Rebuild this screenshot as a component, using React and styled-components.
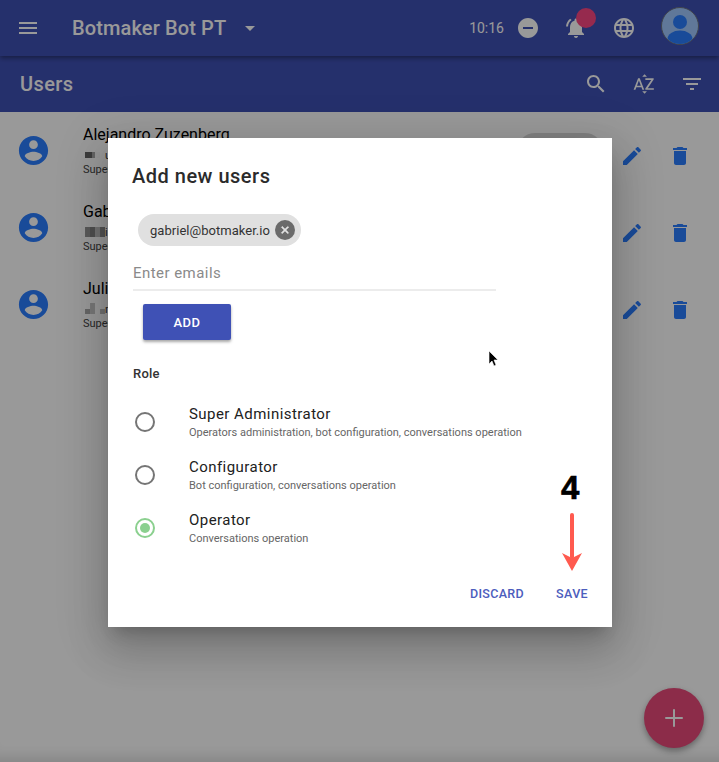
import React from "react";
import styled, { createGlobalStyle } from "styled-components";

const GlobalStyle = createGlobalStyle`
  html, body {
    margin: 0;
    padding: 0;
    height: 100%;
    overflow: hidden;
    background: #fff;
    font-family: Roboto, "Liberation Sans", sans-serif;
  }
`;

const Page = styled.div`
  position: relative;
  width: 719px;
  height: 762px;
  overflow: hidden;
  background: #fff;
`;

const TopBar = styled.header`
  position: relative;
  z-index: 1;
  height: 56px;
  display: flex;
  align-items: center;
  padding-left: 16px;
  padding-right: 20px;
  background: #3f51b5;
  color: #fff;
  box-shadow: 0 2px 5px rgba(0, 0, 0, 0.4);
`;

const AppName = styled.div`
  margin-left: 32px;
  font-size: 20px;
  font-weight: 500;
  letter-spacing: 0.13px;
`;

const Spacer = styled.div`
  flex: 1;
`;

const Clock = styled.div`
  font-size: 14px;
`;

const IconSlot = styled.div`
  position: relative;
  width: ${(p) => p.$size || 48}px;
  height: ${(p) => (p.$size ? p.$size : 24)}px;
  display: flex;
  justify-content: center;
  flex: none;
`;

const Badge = styled.span`
  position: absolute;
  top: -8px;
  left: 24px;
  width: 20px;
  height: 20px;
  border-radius: 50%;
  background: #fb4682;
`;

const Avatar = styled.div`
  width: 38px;
  height: 38px;
  margin: 0 0 4px 13px;
  border-radius: 50%;
  box-sizing: border-box;
  border: 1px solid #6c7280;
  overflow: hidden;
  background: #a0c9ff;
`;

const SubBar = styled.div`
  height: 56px;
  display: flex;
  align-items: center;
  padding-left: 20px;
  padding-right: 3px;
  background: #3f51b5;
  color: #fff;
`;

const SectionName = styled.div`
  font-size: 20px;
  font-weight: 500;
  letter-spacing: 0.4px;
`;

const UserRow = styled.div`
  height: 77px;
  display: flex;
  align-items: center;
  padding-left: 16px;
  padding-right: 15px;
`;

const UserIcon = styled(IconSlot)`
  color: #2b7dff;
`;

const UserInfo = styled.div`
  margin-left: 32px;
  padding-top: 1px;
  flex: 1;
  display: flex;
  flex-direction: column;
`;

const UserName = styled.div`
  font-size: 16px;
  line-height: 20px;
  color: #000;
`;

const UserMail = styled.div`
  display: flex;
  align-items: center;
  height: 14px;
  margin: 3px 0 0 2px;
  font-size: 11px;
  color: #333;
`;

const Pixel = styled.span`
  width: ${(p) => p.$w}px;
  height: ${(p) => p.$h}px;
  align-self: ${(p) => (p.$low ? "flex-end" : "center")};
  margin-bottom: ${(p) => (p.$low ? 2 : 0)}px;
  background: rgb(${(p) => p.$g}, ${(p) => p.$g}, ${(p) => p.$g});
`;

const UserRole = styled.div`
  font-size: 11px;
  line-height: 15px;
  color: #444;
`;

const StatusPill = styled.div`
  width: 86px;
  height: 36px;
  margin-right: 5px;
  border-radius: 18px;
  background: #d8d8d8;
`;

const RowActions = styled.div`
  display: flex;
  margin-top: 11px;
  color: #2b7dff;
`;

const Fab = styled.div`
  position: absolute;
  right: 15px;
  bottom: 14px;
  width: 60px;
  height: 60px;
  border-radius: 50%;
  background: #e94a7b;
  color: #fff;
  display: flex;
  align-items: center;
  justify-content: center;
  box-shadow: 0 3px 6px rgba(0, 0, 0, 0.35);
`;

const Scrim = styled.div`
  position: absolute;
  inset: 0;
  z-index: 2;
  padding-top: 3px;
  box-sizing: border-box;
  display: flex;
  align-items: center;
  justify-content: center;
  background: rgba(0, 0, 0, 0.4);
  box-shadow: inset 0 -16px 14px -12px rgba(0, 0, 0, 0.14);
`;

const Modal = styled.div`
  position: relative;
  width: 504px;
  height: 489px;
  box-sizing: border-box;
  padding: 26px 24px 0;
  margin-left: 1px;
  display: flex;
  flex-direction: column;
  background: #fff;
  box-shadow: 0 11px 15px -7px rgba(0, 0, 0, 0.2), 0 24px 38px 3px rgba(0, 0, 0, 0.14),
    0 9px 46px 8px rgba(0, 0, 0, 0.12);
`;

const ModalTitle = styled.h2`
  margin: 0;
  font-size: 20px;
  line-height: 24px;
  font-weight: 500;
  letter-spacing: 0.5px;
  color: #2b2b2b;
`;

const Chip = styled.div`
  align-self: flex-start;
  height: 32px;
  margin: 26px 0 0 6px;
  padding: 0 6px 0 12px;
  display: flex;
  align-items: center;
  gap: 5px;
  border-radius: 16px;
  background: #e0e0e0;
  font-size: 13px;
  letter-spacing: 0.03px;
  color: #333;
`;

const ChipClose = styled.span`
  width: 20px;
  height: 20px;
  border-radius: 50%;
  background: #6b6b6b;
  color: #e6e6e6;
  display: flex;
  align-items: center;
  justify-content: center;

  svg path {
    stroke: currentColor;
    stroke-width: 1.6;
  }
`;

const EmailField = styled.div`
  width: 363px;
  height: 45px;
  margin-left: 1px;
  box-sizing: border-box;
  display: flex;
  align-items: center;
  padding-top: 10px;
  border-bottom: 2px solid #ececec;
  font-size: 15px;
  letter-spacing: 0.45px;
  color: #8a8a8a;
`;

const AddButton = styled.div`
  width: 88px;
  height: 36px;
  margin: 13px 0 0 11px;
  display: flex;
  align-items: center;
  justify-content: center;
  border-radius: 2px;
  background: #3f51b5;
  color: #fff;
  font-size: 13px;
  font-weight: 500;
  letter-spacing: 0.5px;
  box-shadow: 0 2px 3px rgba(0, 0, 0, 0.35);
`;

const RoleLabel = styled.div`
  margin: 26px 0 0 1px;
  font-size: 13px;
  line-height: 15px;
  font-weight: 500;
  letter-spacing: 0.2px;
  color: #333;
`;

const RoleList = styled.div`
  margin-top: 21px;
  display: flex;
  flex-direction: column;
  gap: 13px;
`;

const RoleRow = styled.div`
  height: 40px;
  display: flex;
  align-items: center;
  padding-left: 3px;
`;

const Radio = styled.span`
  width: 20px;
  height: 20px;
  box-sizing: border-box;
  flex: none;
  border-radius: 50%;
  border: 2px solid ${(p) => (p.$on ? "#8bd08f" : "#757575")};
  display: flex;
  align-items: center;
  justify-content: center;

  &::after {
    content: "";
    display: ${(p) => (p.$on ? "block" : "none")};
    width: 10px;
    height: 10px;
    border-radius: 50%;
    background: #8bd08f;
  }
`;

const RoleText = styled.div`
  margin-left: 34px;
  display: flex;
  flex-direction: column;
`;

const RoleName = styled.div`
  font-size: 15px;
  line-height: 21px;
  letter-spacing: 0.45px;
  color: #212121;
`;

const RoleHint = styled.div`
  font-size: 11px;
  line-height: 16px;
  color: #666;
`;

const ModalFooter = styled.div`
  margin-top: 38px;
  display: flex;
  justify-content: flex-end;
  gap: 32px;
`;

const TextButton = styled.div`
  font-size: 12.5px;
  line-height: 16px;
  font-weight: 500;
  letter-spacing: 0.35px;
  color: #4c5dbd;
`;

const StepNumber = styled.div`
  position: absolute;
  left: 453px;
  top: 332px;
  font-family: "Liberation Sans", sans-serif;
  font-size: 33px;
  line-height: 36px;
  font-weight: 700;
  color: #000;
  -webkit-text-stroke: 0.6px #000;
`;

const StepArrow = styled.svg`
  position: absolute;
  left: 452px;
  top: 374px;
`;

const Cursor = styled.svg`
  position: absolute;
  left: 380px;
  top: 212px;
`;

const Icon = ({ d, size = 24 }) => (
    <svg width={size} height={size} viewBox="0 0 24 24" fill="currentColor">
        <path d={d} />
    </svg>
);

const paths = {
    menu: "M3 18h18v-2H3v2zm0-5h18v-2H3v2zm0-7v2h18V6H3z",
    drop: "M7 10l5 5 5-5z",
    minus: "M12 2C6.48 2 2 6.48 2 12s4.48 10 10 10 10-4.48 10-10S17.52 2 12 2zm5 11H7v-2h10v2z",
    bell: "M7.58 4.08L6.15 2.65C3.75 4.48 2.17 7.3 2.03 10.5h2c.15-2.65 1.51-4.97 3.55-6.42zm12.39 6.42h2c-.15-3.2-1.73-6.02-4.12-7.85l-1.42 1.43c2.02 1.45 3.39 3.77 3.54 6.42zM18 11c0-3.07-1.64-5.64-4.5-6.32V4c0-.83-.67-1.5-1.5-1.5s-1.5.67-1.5 1.5v.68C7.63 5.36 6 7.92 6 11v5l-2 2v1h16v-1l-2-2v-5zm-6 11c.14 0 .27-.01.4-.04.65-.14 1.18-.58 1.44-1.18.1-.24.15-.5.15-.78h-4c.01 1.1.9 2 2.01 2z",
    globe: "M11.99 2C6.47 2 2 6.48 2 12s4.47 10 9.99 10C17.52 22 22 17.52 22 12S17.52 2 11.99 2zm6.93 6h-2.95c-.32-1.25-.78-2.45-1.38-3.56 1.84.63 3.37 1.91 4.33 3.56zM12 4.04c.83 1.2 1.48 2.53 1.91 3.96h-3.82c.43-1.43 1.08-2.76 1.91-3.96zM4.26 14C4.1 13.36 4 12.69 4 12s.1-1.36.26-2h3.38c-.08.66-.14 1.32-.14 2 0 .68.06 1.34.14 2H4.26zm.82 2h2.95c.32 1.25.78 2.45 1.38 3.56-1.84-.63-3.37-1.9-4.33-3.56zm2.95-8H5.08c.96-1.66 2.49-2.93 4.33-3.56C8.81 5.55 8.35 6.75 8.03 8zM12 19.96c-.83-1.2-1.48-2.53-1.91-3.96h3.82c-.43 1.43-1.08 2.76-1.91 3.96zM14.34 14H9.66c-.09-.66-.16-1.32-.16-2 0-.68.07-1.35.16-2h4.68c.09.65.16 1.32.16 2 0 .68-.07 1.34-.16 2zm.25 5.56c.6-1.11 1.06-2.31 1.38-3.56h2.95c-.96 1.65-2.49 2.93-4.33 3.56zM16.36 14c.08-.66.14-1.32.14-2 0-.68-.06-1.34-.14-2h3.38c.16.64.26 1.31.26 2s-.1 1.36-.26 2h-3.38z",
    search: "M15.5 14h-.79l-.28-.27C15.41 12.59 16 11.11 16 9.5 16 5.91 13.09 3 9.5 3S3 5.91 3 9.5 5.91 16 9.5 16c1.61 0 3.09-.59 4.23-1.57l.27.28v.79l5 4.99L20.49 19l-4.99-5zm-6 0C7.01 14 5 11.99 5 9.5S7.01 5 9.5 5 14 7.01 14 9.5 11.99 14 9.5 14z",
    sort: "M14.94 4.66h-4.72l2.36-2.36zm-4.69 14.71h4.66l-2.33 2.33zM6.1 6.27L1.6 17.73h1.84l.92-2.45h5.11l.92 2.45h1.84L7.74 6.27H6.1zm-1.13 7.37l1.94-5.18 1.94 5.18H4.97zm10.76 2.5h6.12v1.59h-8.53v-1.29l5.92-8.56h-5.88v-1.6h8.3v1.26l-5.93 8.6z",
    filter: "M10 18h4v-2h-4v2zM3 6v2h18V6H3zm3 7h12v-2H6v2z",
    account: "M12 2C6.48 2 2 6.48 2 12s4.48 10 10 10 10-4.48 10-10S17.52 2 12 2zm0 3c1.66 0 3 1.34 3 3s-1.34 3-3 3-3-1.34-3-3 1.34-3 3-3zm0 14.2c-2.5 0-4.71-1.28-6-3.22.03-1.99 4-3.08 6-3.08 1.99 0 5.97 1.09 6 3.08-1.29 1.94-3.5 3.22-6 3.22z",
    edit: "M3 17.25V21h3.75L17.81 9.94l-3.75-3.75L3 17.25zM20.71 7.04c.39-.39.39-1.02 0-1.41l-2.34-2.34c-.39-.39-1.02-.39-1.41 0l-1.83 1.83 3.75 3.75 1.83-1.83z",
    trash: "M6 19c0 1.1.9 2 2 2h8c1.1 0 2-.9 2-2V7H6v12zM19 4h-3.5l-1-1h-5l-1 1H5v2h14V4z",
    close: "M19 6.41L17.59 5 12 10.59 6.41 5 5 6.41 10.59 12 5 17.59 6.41 19 12 13.41 17.59 19 19 17.59 13.41 12z",
};

// the mosaics that hide the e-mail addresses: [grey, height, width, bottom aligned]
const users = [
    { name: "Alejandro Zuzenberg", mail: "u", pill: true, pixels: [[100, 6, 7], [167, 6, 3], [250, 6, 5], [255, 6, 5]] },
    { name: "Gabriel Rodriguez", mail: "i", pixels: [[150, 10, 5], [130, 10, 5], [190, 10, 5], [140, 10, 5]] },
    { name: "Julian Perez", mail: "m", pixels: [[170, 5, 5, true], [200, 11, 5, true], [255, 5, 5, true], [190, 5, 5, true]] },
];

const roles = [
    { name: "Super Administrator", hint: "Operators administration, bot configuration, conversations operation" },
    { name: "Configurator", hint: "Bot configuration, conversations operation" },
    { name: "Operator", hint: "Conversations operation", on: true },
];

export default function App() {
    return (
        <Page>
            <GlobalStyle />
            <TopBar>
                <Icon d={paths.menu} />
                <AppName>Botmaker Bot PT</AppName>
                <IconSlot>
                    <Icon d={paths.drop} />
                </IconSlot>
                <Spacer />
                <Clock>10:16</Clock>
                <IconSlot><Icon d={paths.minus} /></IconSlot>
                <IconSlot>
                    <Icon d={paths.bell} />
                    <Badge />
                </IconSlot>
                <IconSlot><Icon d={paths.globe} /></IconSlot>
                <Avatar>
                    <svg width="36" height="36" viewBox="0 0 36 36">
                        <circle cx="18" cy="14" r="7" fill="#2b7dff" />
                        <ellipse cx="18" cy="31" rx="12.5" ry="8.5" fill="#2b7dff" />
                    </svg>
                </Avatar>
            </TopBar>
            <SubBar>
                <SectionName>Users</SectionName>
                <Spacer />
                <IconSlot><Icon d={paths.search} /></IconSlot>
                <IconSlot><Icon d={paths.sort} /></IconSlot>
                <IconSlot><Icon d={paths.filter} /></IconSlot>
            </SubBar>
            {users.map((u) => (
                <UserRow key={u.name}>
                    <UserIcon $size={35}>
                        <Icon d={paths.account} size={35} />
                    </UserIcon>
                    <UserInfo>
                        <UserName>{u.name}</UserName>
                        <UserMail>
                            {u.pixels.map(([g, h, w, low], i) => (
                                <Pixel key={i} $g={g} $h={h} $w={w} $low={low} />
                            ))}
                            {u.mail}
                        </UserMail>
                        <UserRole>Super Administrator</UserRole>
                    </UserInfo>
                    {u.pill && <StatusPill />}
                    <RowActions>
                        <IconSlot><Icon d={paths.edit} /></IconSlot>
                        <IconSlot><Icon d={paths.trash} /></IconSlot>
                    </RowActions>
                </UserRow>
            ))}
            <Fab>
                <svg width="30" height="30" viewBox="0 0 24 24" fill="none" stroke="currentColor" strokeWidth="1.6">
                    <path d="M12 5v14M5 12h14" />
                </svg>
            </Fab>
            <Scrim>
                <Modal>
                    <ModalTitle>Add new users</ModalTitle>
                    <Chip>
                        gabriel@botmaker.io
                        <ChipClose><Icon d={paths.close} size={12} /></ChipClose>
                    </Chip>
                    <EmailField>Enter emails</EmailField>
                    <AddButton>ADD</AddButton>
                    <RoleLabel>Role</RoleLabel>
                    <RoleList>
                        {roles.map((r) => (
                            <RoleRow key={r.name}>
                                <Radio $on={r.on} />
                                <RoleText>
                                    <RoleName>{r.name}</RoleName>
                                    <RoleHint>{r.hint}</RoleHint>
                                </RoleText>
                            </RoleRow>
                        ))}
                    </RoleList>
                    <ModalFooter>
                        <TextButton>DISCARD</TextButton>
                        <TextButton>SAVE</TextButton>
                    </ModalFooter>
                    <Cursor width="12" height="18" viewBox="0 0 12 18">
                        <path d="M1 1v13l3-3 2 5 2-1-2-5h4z" fill="#000" stroke="#fff" strokeWidth="0.6" />
                    </Cursor>
                    <StepNumber>4</StepNumber>
                    <StepArrow width="24" height="60" viewBox="0 0 24 60">
                        <path d="M12 3v42" stroke="#ff5a4f" strokeWidth="4" strokeLinecap="round" />
                        <path d="M2 41l10 5 10-5-10 18z" fill="#ff5a4f" />
                    </StepArrow>
                </Modal>
            </Scrim>
        </Page>
    );
}
